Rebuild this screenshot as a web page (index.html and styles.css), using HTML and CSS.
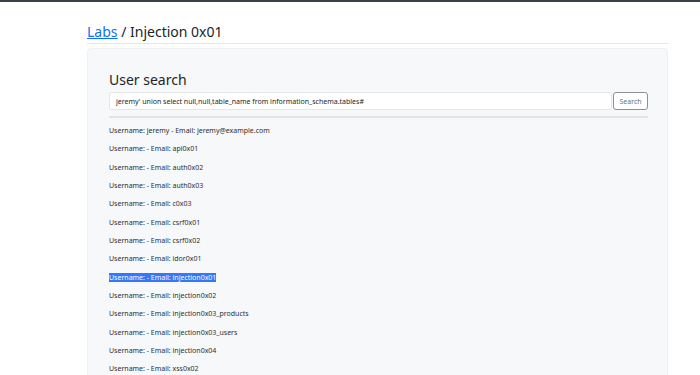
FILE: index.html
```html
<!DOCTYPE html>
<html>
<head>
<meta charset="utf-8">
<link rel="stylesheet" href="styles.css">
</head>
<body>
<div class="topbar"></div>
<div class="container">
  <h1 class="title"><a href="#">Labs</a> / Injection 0x01</h1>
  <div class="card">
    <h2 class="heading">User search</h2>
    <form class="search">
      <input class="field" type="text" value="jeremy' union select null,null,table_name from information_schema.tables#">
      <button class="btn" type="button">Search</button>
    </form>
    <div class="rule"></div>
    <div class="results">
      <p class="row">Username: jeremy - Email: jeremy@example.com</p>
      <p class="row">Username: - Email: api0x01</p>
      <p class="row">Username: - Email: auth0x02</p>
      <p class="row">Username: - Email: auth0x03</p>
      <p class="row">Username: - Email: c0x03</p>
      <p class="row">Username: - Email: csrf0x01</p>
      <p class="row">Username: - Email: csrf0x02</p>
      <p class="row">Username: - Email: idor0x01</p>
      <p class="row"><span class="sel">Username: - Email: injection0x01</span></p>
      <p class="row">Username: - Email: injection0x02</p>
      <p class="row">Username: - Email: injection0x03_products</p>
      <p class="row">Username: - Email: injection0x03_users</p>
      <p class="row">Username: - Email: injection0x04</p>
      <p class="row">Username: - Email: xss0x02</p>
    </div>
  </div>
</div>
</body>
</html>
```

FILE: styles.css
```css
html, body {
  margin: 0;
  padding: 0;
  background: #ffffff;
  font-family: "Noto Sans", "Open Sans", sans-serif;
  color: #212529;
  overflow: hidden;
}
.topbar {
  height: 2px;
  background: #3b404a;
}
.container {
  width: 581px;
  margin: 0 0 0 87px;
}
.title {
  margin: 20px 0 0 0;
  padding-bottom: 1px;
  font-size: 14px;
  font-weight: 400;
  line-height: 20px;
  border-bottom: 1px solid #e4e6e8;
}
.title a {
  color: #0d6efd;
  text-decoration: underline;
}
.card {
  margin-top: 4px;
  background: #f7f8fa;
  border: 1px solid #f0f1f3;
  border-radius: 4px;
  padding: 20px 19px 0 21px;
  height: 400px;
}
.heading {
  margin: 0;
  font-size: 14px;
  font-weight: 400;
  line-height: 22px;
}
.search {
  display: flex;
  margin-top: 1px;
  height: 18px;
}
.field {
  flex: 1;
  box-sizing: border-box;
  height: 18px;
  border: 1px solid #e3e6ea;
  border-radius: 2px;
  background: #fff;
  padding: 0 6px;
  font-family: inherit;
  font-size: 7px;
  color: #212529;
  outline: none;
}
.btn {
  box-sizing: border-box;
  width: 35px;
  height: 18px;
  margin-left: 1px;
  border: 1px solid #8a9096;
  border-radius: 3px;
  background: #fff;
  padding: 0;
  font-family: inherit;
  font-size: 7px;
  color: #6c757d;
}
.rule {
  height: 2px;
  margin-top: 6px;
  background: #e2e4e7;
}
.results {
  padding-top: 7px;
}
.row {
  margin: 0;
  height: 18.35px;
  font-size: 7px;
  line-height: 11px;
  color: #2b2f33;
}
.sel {
  background: #3478f6;
  color: #ffffff;
}
```
